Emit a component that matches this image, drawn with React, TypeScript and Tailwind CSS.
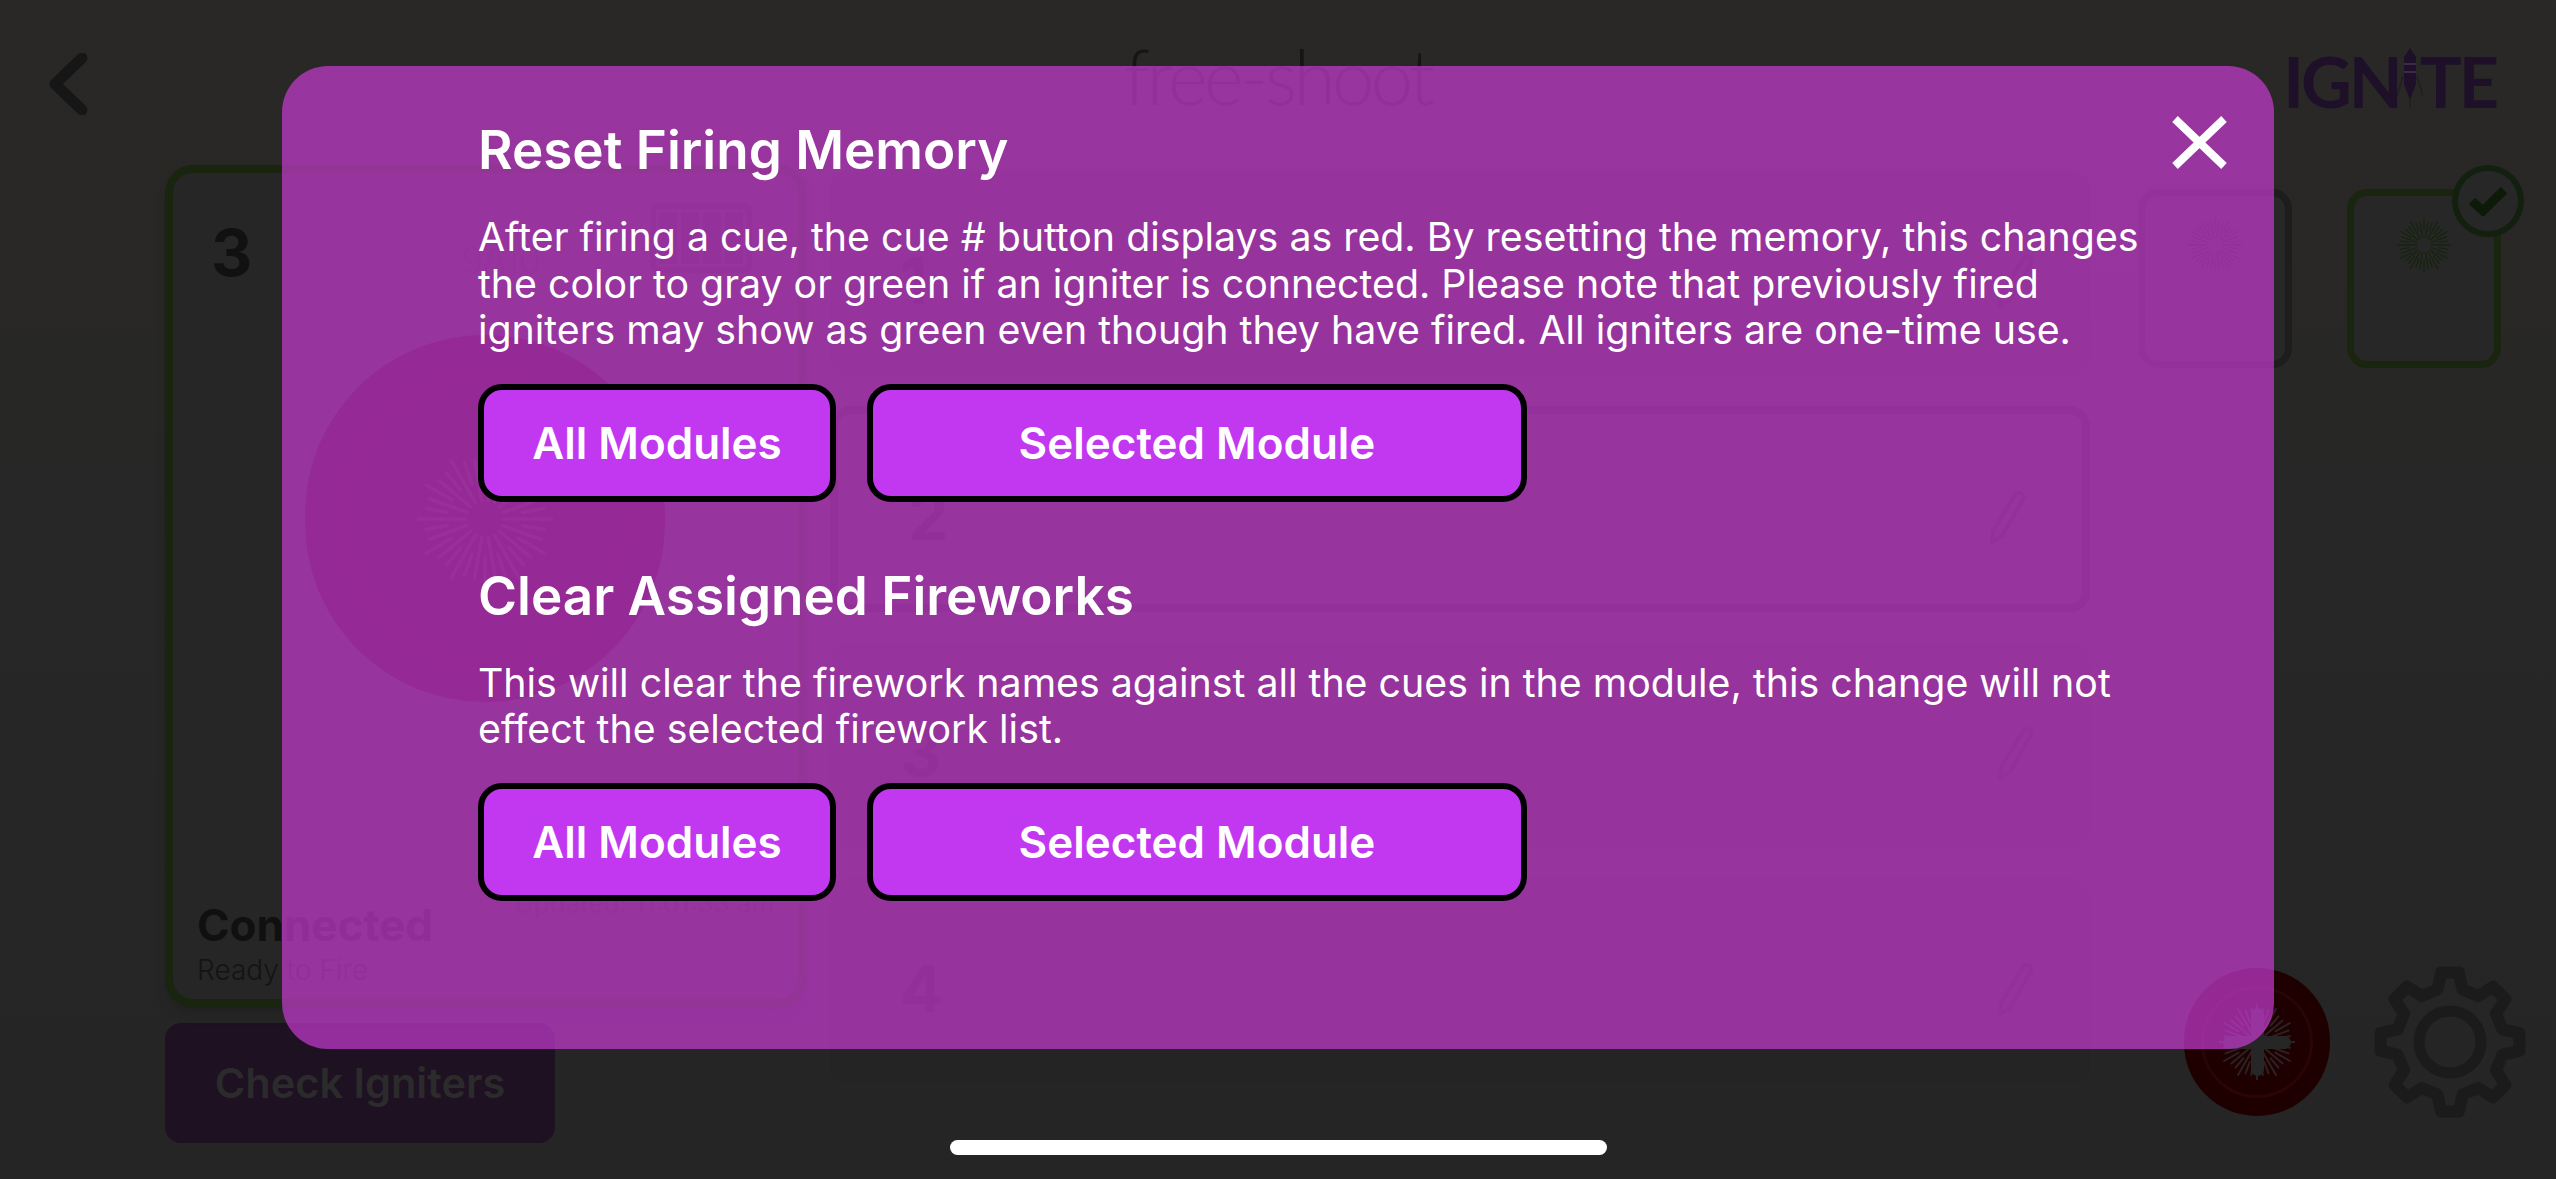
const font = { fontFamily: 'Inter, "Liberation Sans", sans-serif' }

function Burst({ size, color, count = 36 }: { size: number; color: string; count?: number }) {
  return (
    <svg width={size} height={size} viewBox="0 0 100 100" fill="none">
      {Array.from({ length: count }).map((_, i) => {
        const a = (i / count) * Math.PI * 2
        const r1 = i % 2 ? 28 : 14
        const r2 = i % 3 === 0 ? 50 : 44
        return (
          <line
            key={i}
            x1={50 + Math.cos(a) * r1}
            y1={50 + Math.sin(a) * r1}
            x2={50 + Math.cos(a) * r2}
            y2={50 + Math.sin(a) * r2}
            stroke={color}
            strokeWidth="2.6"
            strokeLinecap="round"
          />
        )
      })}
    </svg>
  )
}

function Gear() {
  const teeth = 8
  const cx = 80
  const cy = 80
  const pts: string[] = []
  for (let i = 0; i < teeth; i++) {
    const base = (i / teeth) * Math.PI * 2 - Math.PI / 2
    const step = (Math.PI * 2) / teeth
    const at = (r: number, off: number) =>
      `${(cx + Math.cos(base + off * step) * r).toFixed(1)} ${(cy + Math.sin(base + off * step) * r).toFixed(1)}`
    pts.push(at(54, -0.3), at(70, -0.16), at(70, 0.16), at(54, 0.3))
  }
  return (
    <svg width="160" height="160" viewBox="0 0 160 160" fill="none">
      <path d={`M${pts.join('L')}Z`} stroke="#1b1b1b" strokeWidth="12" strokeLinejoin="round" />
      <circle cx="80" cy="80" r="31" stroke="#1b1b1b" strokeWidth="11" />
    </svg>
  )
}

function Rocket() {
  return (
    <svg width="26" height="62" viewBox="0 0 26 62" fill="none" className="-mx-[3px] -mt-[2px]">
      <path d="M13 2l6 9v27l-6 16-6-16V11z" fill="#1e1028" />
      <path d="M7 18h12M7 26h12" stroke="#3b2a4a" strokeWidth="2" />
      <path d="M6 30L0 50M20 30l6 20M13 54v8" stroke="#1f1f20" strokeWidth="1.5" />
    </svg>
  )
}

function CuePencil() {
  return (
    <svg width="36" height="54" viewBox="0 0 36 54" fill="none">
      <path
        d="M26 4c3-3 9 0 7 5L12 46 2 52l1-11z"
        stroke="#191919"
        strokeWidth="4"
        strokeLinejoin="round"
      />
    </svg>
  )
}

function CueRow({ n, active }: { n: number; active?: boolean }) {
  return (
    <div
      className={`flex h-[206px] items-center justify-between rounded-[20px] pt-[16px] pr-[56px] pl-[70px] ${
        active ? 'border-[8px] border-[#181818] bg-[#262626]' : 'bg-[#242424]'
      }`}
    >
      <span className="text-[64px] leading-none font-bold text-[#151515]">{n}</span>
      <CuePencil />
    </div>
  )
}

function ModuleCard({ tint, checked }: { tint: string; checked?: boolean }) {
  return (
    <div
      className={`relative flex h-[179px] w-[154px] justify-center rounded-[20px] border-[7px] pt-[22px] ${tint}`}
    >
      <Burst size={54} color={checked ? '#17240f' : '#171717'} />
      {checked && (
        <div className="absolute -top-[31px] -right-[30px] flex h-[72px] w-[72px] items-center justify-center rounded-full border-[6px] border-[#13200f] bg-[#272727]">
          <svg width="40" height="30" viewBox="0 0 40 30" fill="none">
            <path d="M4 15l11 10L36 4" stroke="#0d1a08" strokeWidth="9" />
          </svg>
        </div>
      )}
    </div>
  )
}

function ActionButtons() {
  return (
    <div className="flex gap-[31px]">
      <button className="h-[118px] w-[358px] rounded-[24px] border-[6px] border-black bg-[#c238f0] text-[44px] font-semibold text-white">
        All Modules
      </button>
      <button className="h-[118px] w-[660px] rounded-[24px] border-[6px] border-black bg-[#c238f0] text-[44px] font-semibold text-white">
        Selected Module
      </button>
    </div>
  )
}

export default function App() {
  return (
    <div
      className="relative h-[1179px] w-[2556px] overflow-hidden bg-gradient-to-b from-[#292826] to-[#252526]"
      style={font}
    >
      {/* dimmed page behind the dialog */}
      <div className="grid h-[165px] grid-cols-3 items-start">
        <div className="pt-[53px] pl-[48px]">
          <svg width="40" height="62" viewBox="0 0 40 62" fill="none">
            <path d="M34 5L7 31l27 26" stroke="#161616" strokeWidth="11" strokeLinecap="round" strokeLinejoin="round" />
          </svg>
        </div>
        <div className="flex justify-center pt-[38px]">
          <span className="font-['Lato'] text-[76px] leading-none font-light tracking-[-3.5px] text-[#151515]">free-shoot</span>
        </div>
        <div className="flex items-start justify-end pt-[48px] pr-[60px]">
          <span className="flex items-start font-['Lato'] text-[70px] leading-[66px] font-bold tracking-[-3px] text-[#1e1028]">
            IGN
            <Rocket />
            TE
          </span>
        </div>
      </div>

      <div className="flex pl-[165px]">
        <div className="flex w-[641px] flex-col gap-[16px]">
          <div className="relative flex h-[842px] flex-col rounded-[28px] border-[8px] border-[#1a2510] bg-[#262626] px-[24px] pb-[10px] shadow-lg">
            <div className="flex items-start justify-between pt-[48px] pl-[14px]">
              <span className="text-[64px] leading-none font-bold text-[#111111]">3</span>
              <span className="mt-[12px] ml-[100px] text-[36px] font-extralight text-[#1f1f1f]">9A10</span>
              <div className="mt-[-18px] mr-[22px] flex h-[70px] w-[102px] gap-[4px] rounded-[8px] border-[6px] border-[#1d1d1d] p-[3px]">
                <div className="flex-1 bg-[#1d1d1d]" />
                <div className="flex-1 bg-[#1d1d1d]" />
                <div className="flex-1 bg-[#1d1d1d]" />
                <div className="flex-1 bg-[#1d1d1d]" />
              </div>
            </div>
            <div className="mt-[48px] mb-auto ml-[108px] flex h-[367px] w-[360px] items-center justify-center self-start rounded-full bg-[#1e0008]">
              <div className="flex h-[290px] w-[284px] items-center justify-center rounded-full border-[3px] border-[#26030d]">
                <Burst size={136} color="#2f1620" />
              </div>
            </div>
            <div className="flex items-start justify-between">
              <div className="flex flex-col">
                <span className="text-[44px] leading-[52px] font-bold text-[#101010]">Connected</span>
                <span className="text-[28px] leading-[38px] font-light text-[#141414]">Ready to Fire</span>
              </div>
              <span className="-mt-[8px] text-[26px] leading-none text-[#1d1d1d]">Updated: 11:01:33 am</span>
            </div>
          </div>
          <button className="h-[120px] w-[390px] rounded-[16px] bg-[#1e1122] text-[41.5px] font-semibold text-[#2b2b2b]">
            Check Igniters
          </button>
        </div>

        <div className="mt-[5px] ml-[24px] flex w-[1260px] flex-col gap-[30px]">
          <CueRow n={1} />
          <CueRow n={2} active />
          <CueRow n={3} />
          <CueRow n={4} />
        </div>

        <div className="ml-[48px] flex flex-1 flex-col justify-between pt-[24px] pb-[21px]">
          <div className="flex gap-[55px]">
            <ModuleCard tint="border-[#1c1d1c] bg-[#272727]" />
            <ModuleCard tint="border-[#1a2510] bg-[#272727]" checked />
          </div>
          <div className="flex items-center gap-[40px]">
            <div className="ml-[46px] flex h-[148px] w-[146px] items-center justify-center rounded-full bg-[#1e0000]">
              <div className="relative flex h-[112px] w-[112px] items-center justify-center rounded-full border-[3px] border-[#2a0505]">
                <Burst size={76} color="#2c2224" />
                <div className="absolute h-[68px] w-[13px] rounded-full bg-[#262626]" />
                <div className="absolute h-[13px] w-[68px] rounded-full bg-[#262626]" />
              </div>
            </div>
            <Gear />
          </div>
        </div>
      </div>

      <div className="absolute bottom-[24px] left-[950px] h-[15px] w-[657px] rounded-full bg-white" />

      {/* dialog */}
      <div className="absolute top-[66px] left-[282px] h-[983px] w-[1992px] rounded-[46px] bg-[rgba(200,59,210,0.7)] pt-[50px] pl-[196px] text-white">
        <h2 className="text-[53px] leading-[68px] font-semibold">Reset Firing Memory</h2>
        <p className="mt-[30px] text-[39.3px] leading-[46.5px]">
          After firing a cue, the cue # button displays as red. By resetting the memory, this changes
          <br />
          the color to gray or green if an igniter is connected. Please note that previously fired
          <br />
          igniters may show as green even though they have fired. All igniters are one-time use.
        </p>
        <div className="mt-[30px]">
          <ActionButtons />
        </div>
        <h2 className="mt-[60px] text-[53px] leading-[68px] font-semibold">Clear Assigned Fireworks</h2>
        <p className="mt-[30px] text-[39.3px] leading-[46.5px]">
          This will clear the firework names against all the cues in the module, this change will not
          <br />
          effect the selected firework list.
        </p>
        <div className="mt-[30px]">
          <ActionButtons />
        </div>
        <button className="absolute top-[50px] right-[47px]">
          <svg width="55" height="53" viewBox="0 0 55 53" fill="none">
            <path d="M3 3l49 47M52 3L3 50" stroke="white" strokeWidth="8" />
          </svg>
        </button>
      </div>
    </div>
  )
}
